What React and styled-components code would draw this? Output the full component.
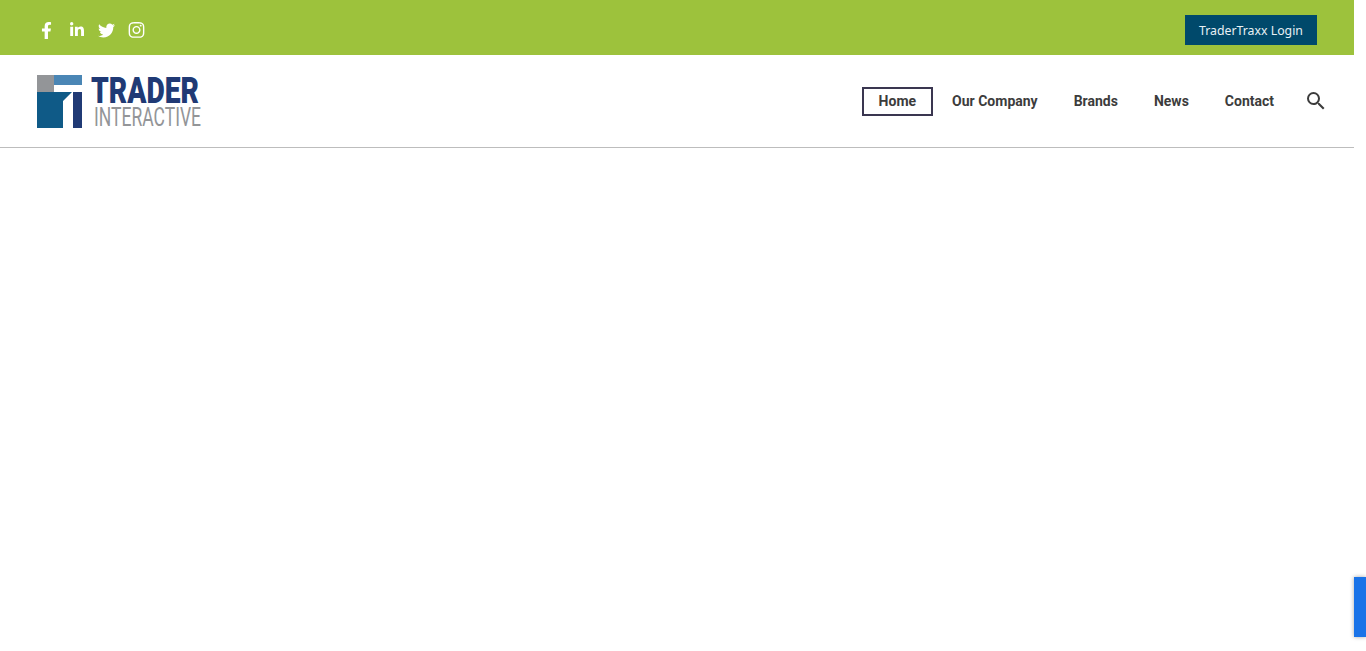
import styled, { createGlobalStyle } from "styled-components"
import { FaFacebookF, FaLinkedinIn, FaTwitter, FaInstagram } from "react-icons/fa"
import { MdSearch } from "react-icons/md"

const GlobalStyle = createGlobalStyle`
    html, body {
        margin: 0;
        padding: 0;
        background: #fff;
        overflow: hidden;
    }
    body {
        font-family: "Roboto", "Liberation Sans", sans-serif;
    }
`

const Page = styled.div`
    width: 1354px;
    height: 651px;
`

const TopBar = styled.div`
    display: flex;
    align-items: center;
    justify-content: space-between;
    height: 55px;
    padding: 5px 37px 0 38px;
    box-sizing: border-box;
    background: #9dc23c;
`

const Socials = styled.div`
    display: flex;
    align-items: center;
    gap: 13px;
`

const SocialLink = styled.a`
    display: flex;
    align-items: center;
    justify-content: center;
    width: 17px;
    height: 18px;
    color: #fff;
    font-size: ${(p) => p.$size || 16}px;
`

const LoginButton = styled.a`
    display: flex;
    align-items: center;
    justify-content: center;
    width: 132px;
    height: 30px;
    background: #00496b;
    color: #e8f0f4;
    font-family: "Noto Sans", "Open Sans", sans-serif;
    font-size: 12.3px;
`

const Header = styled.header`
    display: flex;
    align-items: center;
    justify-content: space-between;
    height: 93px;
    padding: 0 26px 0 37px;
    box-sizing: border-box;
    border-bottom: 1px solid #bdbdbd;
`

const Logo = styled.svg`
    display: block;
    width: 166px;
    height: 56px;
    overflow: visible;
`

const Nav = styled.nav`
    display: flex;
    align-items: center;
`

const NavItem = styled.a`
    display: flex;
    align-items: center;
    justify-content: center;
    box-sizing: border-box;
    height: 29px;
    margin-right: ${(p) => p.$gap}px;
    padding: 0 ${(p) => (p.$active ? 15 : 0)}px;
    border: 2px solid ${(p) => (p.$active ? "#3a3650" : "transparent")};
    border-width: ${(p) => (p.$active ? 2 : 0)}px;
    color: #3c3c3c;
    font-size: 14px;
    font-weight: 700;
`

const SearchIcon = styled(MdSearch)`
    display: block;
    color: #3c3c3c;
    font-size: 24px;
`

const Badge = styled.div`
    position: fixed;
    right: 0;
    top: 577px;
    width: 12px;
    height: 60px;
    background: #1a73e8;
    box-shadow: 0 0 4px rgba(0, 0, 0, 0.35);
`

const navItems = [
    { label: "Home", active: true, gap: 19 },
    { label: "Our Company", gap: 36 },
    { label: "Brands", gap: 36 },
    { label: "News", gap: 36 },
    { label: "Contact", gap: 30 },
]

const App = () => {
    return (
        <Page>
            <GlobalStyle />
            <TopBar>
                <Socials>
                    <SocialLink $size={17}><FaFacebookF /></SocialLink>
                    <SocialLink $size={16}><FaLinkedinIn /></SocialLink>
                    <SocialLink $size={17}><FaTwitter /></SocialLink>
                    <SocialLink $size={18}><FaInstagram /></SocialLink>
                </Socials>
                <LoginButton>TraderTraxx Login</LoginButton>
            </TopBar>
            <Header>
                <Logo viewBox="0 0 166 56">
                    <rect x="0" y="2" width="17" height="17" fill="#939598" />
                    <rect x="17" y="2" width="28" height="10" fill="#4a86b5" />
                    <path d="M0 19H35L26 28V55H0Z" fill="#0f5a87" />
                    <rect x="36" y="19" width="9" height="36" fill="#203a75" />
                    <text
                        x="54"
                        y="30"
                        textLength="108"
                        lengthAdjust="spacingAndGlyphs"
                        fontFamily="Roboto, sans-serif"
                        fontWeight="900"
                        fontSize="36"
                        fill="#203a75"
                    >
                        TRADER
                    </text>
                    <text
                        x="57"
                        y="53"
                        textLength="107"
                        lengthAdjust="spacingAndGlyphs"
                        fontFamily="Roboto, sans-serif"
                        fontWeight="400"
                        fontSize="26"
                        fill="#939598"
                    >
                        INTERACTIVE
                    </text>
                </Logo>
                <Nav>
                    {navItems.map((item) => (
                        <NavItem key={item.label} $active={item.active} $gap={item.gap}>
                            {item.label}
                        </NavItem>
                    ))}
                    <SearchIcon />
                </Nav>
            </Header>
            <Badge />
        </Page>
    )
}

export default App
